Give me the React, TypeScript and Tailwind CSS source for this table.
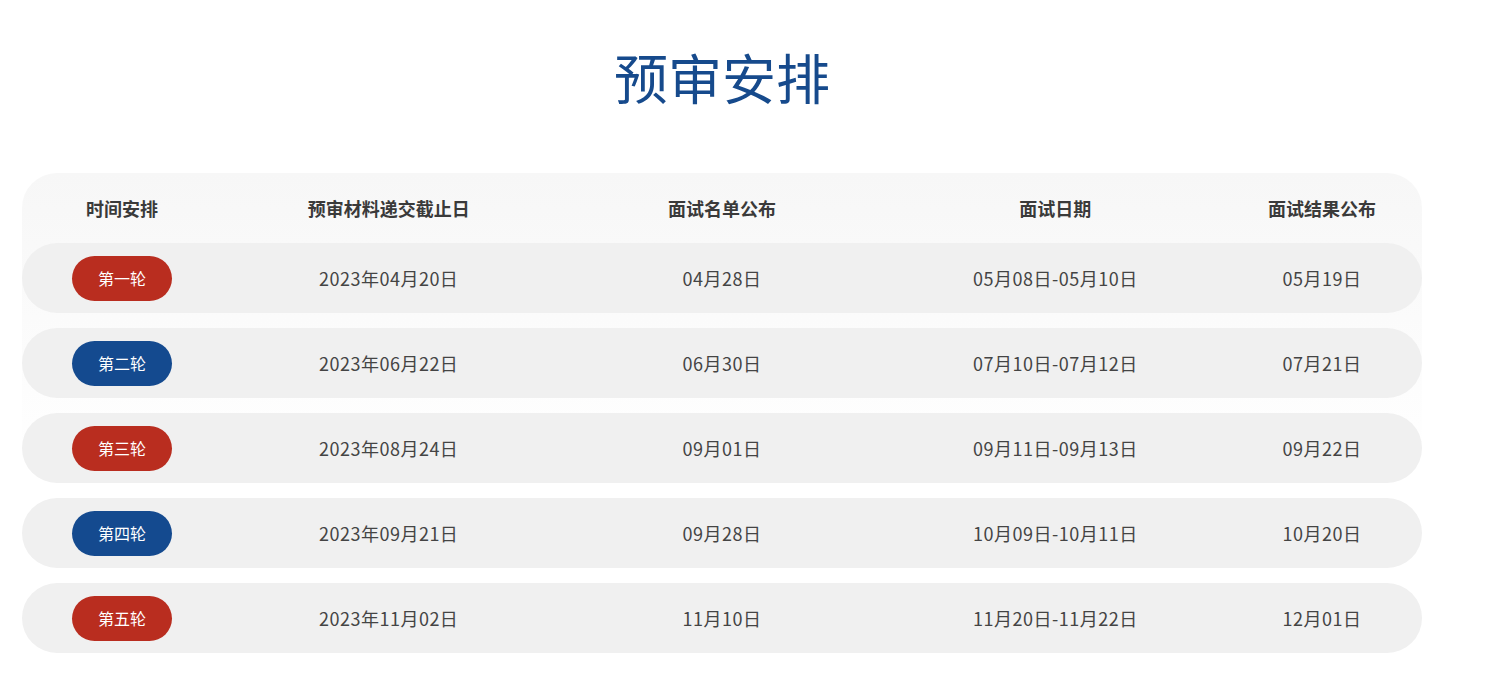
import React from "react";

// 预审安排 table
interface Round {
  name: string;
  color: "red" | "blue";
  deadline: string;
  list: string;
  interview: string;
  result: string;
}

const rounds: Round[] = [
  { name: "第一轮", color: "red", deadline: "2023年04月20日", list: "04月28日", interview: "05月08日-05月10日", result: "05月19日" },
  { name: "第二轮", color: "blue", deadline: "2023年06月22日", list: "06月30日", interview: "07月10日-07月12日", result: "07月21日" },
  { name: "第三轮", color: "red", deadline: "2023年08月24日", list: "09月01日", interview: "09月11日-09月13日", result: "09月22日" },
  { name: "第四轮", color: "blue", deadline: "2023年09月21日", list: "09月28日", interview: "10月09日-10月11日", result: "10月20日" },
  { name: "第五轮", color: "red", deadline: "2023年11月02日", list: "11月10日", interview: "11月20日-11月22日", result: "12月01日" },
];

const font = "font-['Microsoft_YaHei','Noto_Sans_CJK_SC',sans-serif]";

export default function App() {
  return (
    <div className={`min-h-[677px] bg-white ${font}`}>
      <div className="w-[1400px] ml-[22px] pt-[42px]">
        <h1 className="text-center text-[54px] leading-[70px] text-[#164a8c] font-normal">预审安排</h1>

        <div className="mt-[61px] rounded-[35px] bg-gradient-to-b from-[#f7f7f7] via-[#fbfbfb] via-30% to-white to-60%">
          {/* header */}
          <div className="grid grid-cols-[200px_1fr_1fr_1fr_200px] h-[70px] items-center text-[18px] font-bold text-[#3a3a3a] text-center">
            <div>时间安排</div>
            <div>预审材料递交截止日</div>
            <div>面试名单公布</div>
            <div>面试日期</div>
            <div>面试结果公布</div>
          </div>

          <div className="flex flex-col gap-[15px]">
            {rounds.map((r) => (
              <div
                key={r.name}
                className="grid grid-cols-[200px_1fr_1fr_1fr_200px] h-[70px] items-center rounded-full bg-[#f0f0f0] text-[18px] tracking-[0.5px] text-[#444] text-center"
              >
                <div className="flex justify-center">
                  <span
                    className={`w-[100px] h-[45px] rounded-full flex items-center justify-center text-white text-[16px] tracking-normal ${
                      r.color === "red" ? "bg-[#b92d1f]" : "bg-[#144a8f]"
                    }`}
                  >
                    {r.name}
                  </span>
                </div>
                <div>{r.deadline}</div>
                <div>{r.list}</div>
                <div>{r.interview}</div>
                <div>{r.result}</div>
              </div>
            ))}
          </div>
        </div>
      </div>
    </div>
  );
}
